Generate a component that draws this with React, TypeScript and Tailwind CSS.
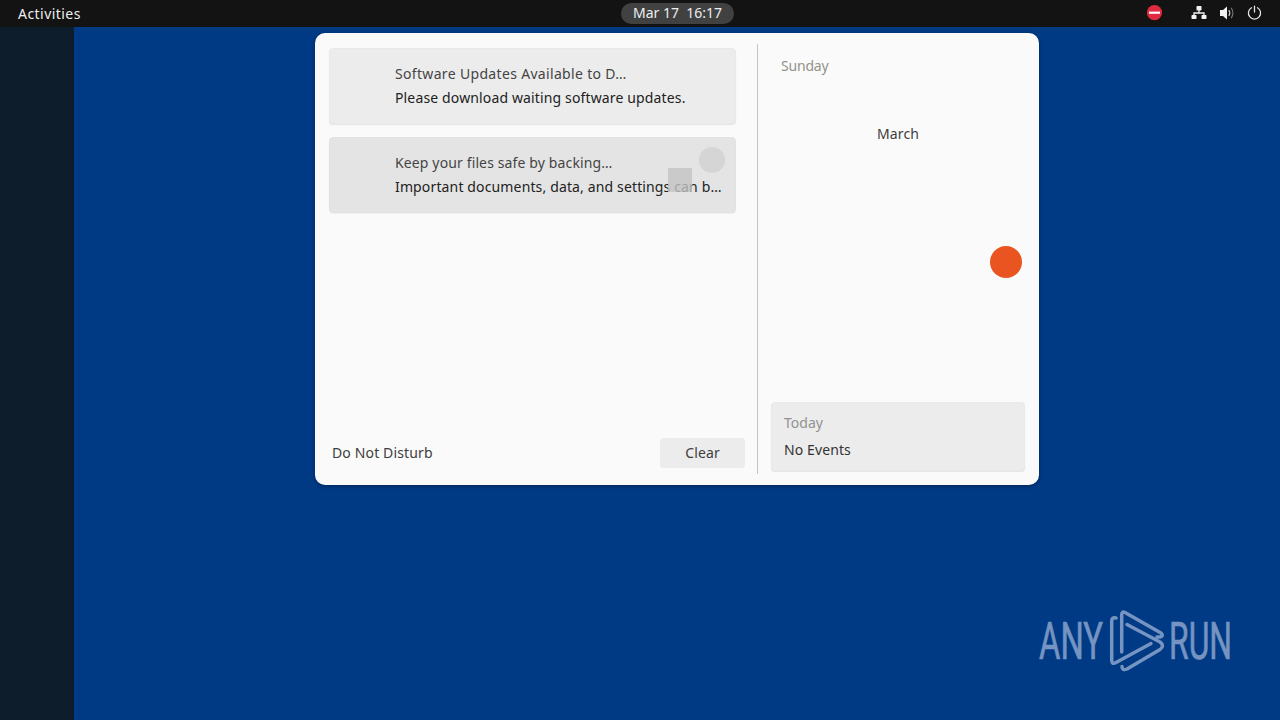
import React from "react";

interface NoticeProps {
  title: string;
  body: string;
  active?: boolean;
  titleClass: string;
}

function Notice({ title, body, active, titleClass }: NoticeProps) {
  return (
    <article
      className={
        "relative h-[76px] w-[407px] rounded-[4px] border pl-[65px] pt-[13px] " +
        (active
          ? "border-[#e2e2e2] bg-[#e4e4e4] shadow-[0_1px_1px_rgba(0,0,0,0.04)]"
          : "border-[#e9e9e9] bg-[#ececec] shadow-[0_1px_1px_rgba(0,0,0,0.09)]")
      }
    >
      <h2 className={"h-6 whitespace-nowrap leading-6 text-[#444444] " + titleClass}>{title}</h2>
      <p className="h-6 whitespace-nowrap leading-6 tracking-[0.14px] text-[#222222]">{body}</p>
      {active && (
        <>
          <span className="absolute right-[10px] top-[9px] size-[26px] rounded-full bg-[#d5d5d5]" />
          <span className="absolute left-[338px] top-[30px] size-6 bg-[#c3c3c3]/80" />
        </>
      )}
    </article>
  );
}

function StatusIcons() {
  return (
    <div className="flex h-[27px] justify-end pr-[17px] pt-[5px]">
      <svg className="mr-[28px] size-4" viewBox="0 0 16 16">
        <circle cx="7.5" cy="7.6" r="7.6" fill="#df2b40" />
        <rect x="2" y="6.6" width="11" height="2.2" fill="#ffffff" />
      </svg>
      <svg className="mr-[12px] size-4" viewBox="0 0 16 16" fill="#f2f2f2">
        <rect x="5.5" y="1" width="5" height="4.5" rx="0.7" />
        <rect x="0.5" y="10" width="5" height="4" rx="0.7" />
        <rect x="10.5" y="10" width="5" height="4" rx="0.7" />
        <path d="M3 11V8H13V11M8 5V8" fill="none" stroke="#f2f2f2" strokeWidth="1.3" />
      </svg>
      <svg className="mr-[12px] size-4" viewBox="0 0 16 16" fill="none">
        <path d="M1 5H4L8 1.5V14.5L4 11H1Z" fill="#f2f2f2" />
        <path d="M9.8 5.2Q11.8 8 9.8 10.8" stroke="#c9c9c9" strokeWidth="1.2" />
        <path d="M12.2 2.9Q15.6 8 12.2 13.1" stroke="#777777" strokeWidth="1.1" />
      </svg>
      <svg className="size-4" viewBox="0 0 16 16" fill="none" stroke="#e6e6e6" strokeWidth="1.25" strokeLinecap="round">
        <path d="M4.5 2.7A6.1 6.1 0 1 0 10.5 2.7M7.5 1V7" />
      </svg>
    </div>
  );
}

function Watermark() {
  return (
    <svg className="absolute left-[1030px] top-[600px] h-20 w-[210px] overflow-visible" viewBox="0 0 210 80">
      <g fill="#7594c1" stroke="#7594c1" strokeWidth="0.7" fontFamily="Roboto, sans-serif" fontSize="52">
        <text x="9" y="59" textLength="64" lengthAdjust="spacingAndGlyphs">ANY</text>
        <text x="139" y="59" textLength="63" lengthAdjust="spacingAndGlyphs">RUN</text>
      </g>
      <g fill="none" stroke="#7594c1" strokeWidth="3.5" strokeLinecap="round" strokeLinejoin="round">
        <path d="M91.7 52V15Q91.7 11 95 12.5L131 33Q134 36 130 37L127 37" />
        <path d="M86 18Q81.7 17 81.7 21V60Q81.7 65 86 62.5L121 43.5" />
        <path d="M92 66.5Q92 71 97 69L130 49.5Q135 45.5 130 42L97 24.5" />
      </g>
    </svg>
  );
}

export default function App() {
  return (
    <main className="relative flex h-[720px] w-[1280px] flex-col overflow-hidden bg-[#003a85] font-['Noto_Sans',sans-serif] text-[14px] text-[#3d3d3d]">
      <header className="grid h-[27px] shrink-0 grid-cols-[621px_113px_1fr] bg-[#131313] text-[#eeeeee]">
        <span className="pl-[18px] leading-[27px] tracking-[0.45px]">Activities</span>
        <time className="mt-[3px] h-[21px] whitespace-pre rounded-full bg-[#414141] text-center leading-[20px]">Mar 17  16:17</time>
        <StatusIcons />
      </header>
      <div className="flex flex-1">
        <aside className="w-[74px] bg-[#0e1d2c]" />
        <section className="ml-[241px] mt-[6px] flex h-[452px] w-[724px] rounded-[10px] bg-[#fafafa] shadow-[0_1px_4px_rgba(0,0,0,0.35)]">
          <div className="flex w-[442px] flex-col pl-[14px] pt-[15px]">
            <div className="flex flex-1 flex-col gap-[13px]">
              <Notice titleClass="tracking-[0.33px]" title="Software Updates Available to D…" body="Please download waiting software updates." />
              <Notice titleClass="tracking-[0.13px]" active title="Keep your files safe by backing…" body="Important documents, data, and settings can b…" />
            </div>
            <div className="mb-[17px] flex h-[30px] justify-between pl-[3px] pr-[12px]">
              <span className="leading-[29px] tracking-[0.14px]">Do Not Disturb</span>
              <button className="h-[30px] w-[85px] rounded-[4px] bg-[#ececec] pb-[2px] tracking-[0.14px]">Clear</button>
            </div>
          </div>
          <div className="mt-[11px] h-[430px] w-px bg-[#c4c4c4]" />
          <div className="flex w-[281px] flex-col pl-3 pr-[13px]">
            <span className="ml-[11px] mt-[21px] h-6 leading-6 tracking-[-0.2px] text-[#929289]">Sunday</span>
            <span className="mt-[44px] h-6 text-center leading-6 tracking-[0.14px]">March</span>
            <span className="ml-auto mr-[4px] mt-[100px] size-8 rounded-full bg-[#e95420]" />
            <div className="mx-px mt-[124px] h-[69px] rounded-[4px] border border-[#e9e9e9] bg-[#ececec] pl-[12px] pt-[8px] shadow-[0_1px_1px_rgba(0,0,0,0.09)]">
              <div className="h-[27px] leading-6 text-[#929292]">Today</div>
              <div className="leading-6 tracking-[0.1px] text-[#333333]">No Events</div>
            </div>
          </div>
        </section>
      </div>
      <Watermark />
    </main>
  );
}
